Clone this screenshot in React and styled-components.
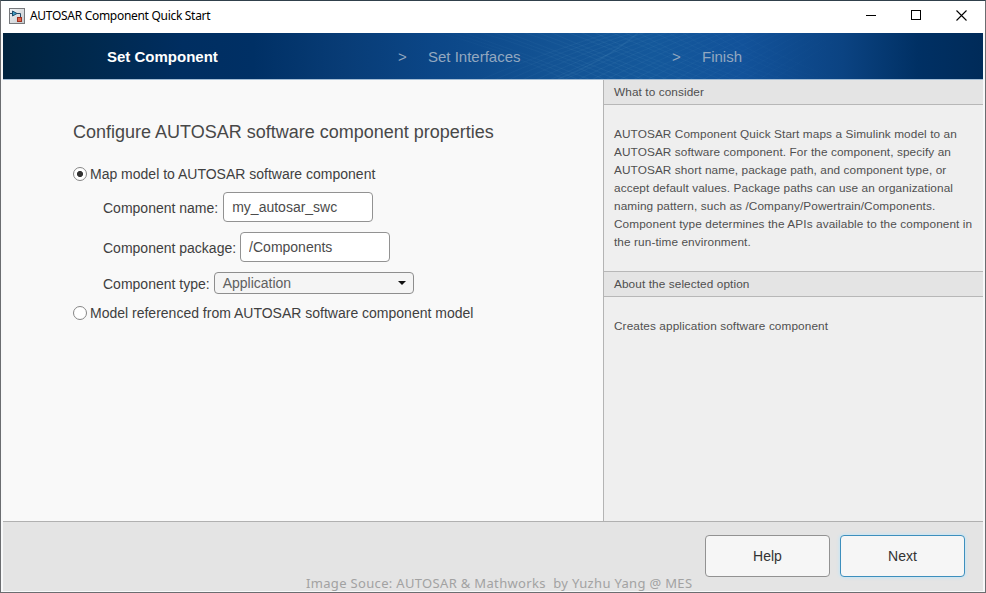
import React from "react";
import styled, { createGlobalStyle } from "styled-components";

const GlobalStyle = createGlobalStyle`
  * { box-sizing: border-box; }
  html, body { margin: 0; padding: 0; overflow: hidden; }
  body { font-family: "Liberation Sans", Arial, Helvetica, sans-serif; color: #404040; }
  input, button { font-family: inherit; margin: 0; }
`;

const Window = styled.div`
  width: 986px;
  height: 593px;
  display: flex;
  flex-direction: column;
  background: #f7f8f9;
  border: 1px solid #6b6d70;
  border-top-color: #30404b;
  padding: 0 2px 1px;
`;

const TitleBar = styled.header`
  height: 32px;
  flex: none;
  margin: 0 -2px;
  padding: 0 18px 3px 8px;
  display: flex;
  align-items: center;
  background: #fff;
`;

const Title = styled.span`
  margin-left: 5px;
  flex: 1;
  font: 12px/16px "Noto Sans", sans-serif;
  letter-spacing: -0.3px;
  color: #000;
`;

const WindowControls = styled.div`
  display: flex;
  align-items: center;
  gap: 34px;
  svg { display: block; }
`;

const Banner = styled.nav`
  position: relative;
  height: 47px;
  flex: none;
  display: flex;
  align-items: center;
  padding-top: 1px;
  border-bottom: 1px solid #a4bdd5;
  background: linear-gradient(90deg, #00233f 0, #00294e 90px, #002e61 180px, #003065 250px, #083c76 340px, #0b4687 430px, #135394 550px, #14589b 650px, #12529a 740px, #0b4382 840px, #003064 915px, #002b59 980px);
`;

const Mesh = styled.svg`
  position: absolute;
  inset: 0;
  width: 100%;
  height: 46px;
`;

const Step = styled.span`
  position: relative;
  width: ${(p) => p.$width}px;
  margin-left: ${(p) => p.$gap}px;
  font-size: 15px;
  line-height: 18px;
  white-space: nowrap;
  font-weight: ${(p) => (p.$active ? 700 : 400)};
  color: ${(p) => (p.$active ? "#fff" : "#93a8c0")};
`;

const Body = styled.div`
  flex: 1;
  min-height: 0;
  display: flex;
`;

const Main = styled.main`
  width: 600px;
  padding: 40px 0 0 70px;
  background: #f9f9f9;
`;

const Heading = styled.h1`
  margin: 0 0 22px;
  font-size: 18px;
  line-height: 24px;
  font-weight: 400;
  color: #484848;
`;

const Option = styled.label`
  display: flex;
  align-items: center;
  height: 16px;
  gap: 3px;
  font-size: 14px;
  white-space: nowrap;
`;

const Radio = styled.input`
  appearance: none;
  width: 14px;
  height: 14px;
  border: 1px solid #868686;
  border-radius: 50%;
  background: #fff;
  &:checked { background: radial-gradient(circle, #333 0 2.7px, #fff 3.4px); }
`;

const Fields = styled.div`
  padding: 10px 0 11px 30px;
`;

const Field = styled.label`
  display: flex;
  align-items: center;
  height: ${(p) => p.$height || 30}px;
  margin-bottom: ${(p) => p.$after || 0}px;
  gap: ${(p) => p.$gap || 4}px;
  font-size: 14px;
  white-space: nowrap;
`;

const FieldName = styled.span`
  padding-top: 2px;
`;

const TextInput = styled.input`
  width: 150px;
  height: 30px;
  padding: 0 8px 1px;
  border: 1px solid #929292;
  border-radius: 4px;
  background: #fff;
  font-size: 14px;
  color: #4b4b4b;
`;

const Dropdown = styled.div`
  width: 200px;
  height: 22px;
  padding: 0 7px 0 8px;
  display: flex;
  align-items: center;
  justify-content: space-between;
  border: 1px solid #8e8e8e;
  border-radius: 4px;
  background: #f5f5f5;
  color: #606060;
`;

const Sidebar = styled.aside`
  flex: 1;
  border-left: 1px solid #b4b4b4;
  background: #efefef;
  font-size: 11.8px;
  letter-spacing: 0.095px;
  color: #4f4f4f;
`;

const PanelTitle = styled.h2`
  height: ${(p) => (p.$ruled ? 26 : 25)}px;
  margin: 0;
  padding-left: 10px;
  border-top: ${(p) => (p.$ruled ? "1px solid #b7b7b7" : "0")};
  border-bottom: 1px solid #b7b7b7;
  background: #e4e4e4;
  font-size: inherit;
  line-height: 24px;
  font-weight: 400;
`;

const PanelText = styled.p`
  height: ${(p) => p.$height}px;
  margin: 0;
  padding: 20px 0 0 10px;
  line-height: 18px;
  white-space: pre;
`;

const Footer = styled.footer`
  position: relative;
  height: 70px;
  flex: none;
  display: flex;
  justify-content: flex-end;
  gap: 10px;
  padding: 13px 18px 0;
  border-top: 1px solid #b0b0b0;
  background: #e4e4e4;
`;

const ActionButton = styled.button`
  width: 125px;
  height: 42px;
  padding: 0;
  border: 1px solid ${(p) => (p.$primary ? "#3d8fbd" : "#929292")};
  border-radius: 4px;
  background: #f6f6f6;
  box-shadow: ${(p) => (p.$primary ? "0 0 3px 1px #c6e5f5" : "none")};
  font-size: 14px;
  color: #333;
`;

const Credit = styled.span`
  position: absolute;
  left: 303px;
  bottom: -1px;
  font: 13px/18px "Noto Sans", sans-serif;
  letter-spacing: 0.33px;
  color: #a2a2a2;
  white-space: pre;
`;

const AppIcon = () => (
  <svg width="16" height="16" viewBox="0 0 16 16">
    <defs>
      <linearGradient id="iconFace" x1="0" y1="0" x2="1" y2="1">
        <stop offset="0" stopColor="#f2f3f4" />
        <stop offset="1" stopColor="#c4cace" />
      </linearGradient>
    </defs>
    <rect x=".5" y=".5" width="15" height="15" fill="url(#iconFace)" stroke="#77797c" />
    <path d="M1 5.5h2M8 5.5h3.5V9" fill="none" stroke="#284b67" />
    <path d="M3.5 3v5l4.5-2.5z" fill="#3fa0c6" stroke="#1e4b69" />
    <rect x="8.5" y="9.5" width="4" height="4" fill="#e2664a" stroke="#9c3020" />
  </svg>
);

const meshLines = Array.from({ length: 22 }, (_, i) => i);

const BannerMesh = () => (
  <Mesh viewBox="0 0 980 46" preserveAspectRatio="none">
    <defs>
      <linearGradient id="meshColor" gradientUnits="userSpaceOnUse" x1="400" x2="840" y1="0" y2="0">
        <stop offset="0" stopColor="#7bb6d6" stopOpacity="0" />
        <stop offset=".45" stopColor="#7bb6d6" stopOpacity=".1" />
        <stop offset="1" stopColor="#7bb6d6" stopOpacity="0" />
      </linearGradient>
    </defs>
    <g fill="none" stroke="url(#meshColor)" strokeWidth=".8">
      {meshLines.map((i) => (
        <g key={i}>
          <path d={`M${420 + i * 15} -4Q${500 + i * 12} ${15 + (i % 3) * 3} ${570 + i * 13} 50`} />
          <path d={`M${470 + i * 14} 50Q${540 + i * 13} 19 ${620 + i * 11} -4`} />
        </g>
      ))}
      <path d="M555 46Q602 28 635 0" strokeWidth="1.5" />
    </g>
  </Mesh>
);

export default function App() {
  return (
    <>
      <GlobalStyle />
      <Window>
        <TitleBar>
          <AppIcon />
          <Title>AUTOSAR Component Quick Start</Title>
          <WindowControls>
            <svg width="11" height="11" viewBox="0 0 11 11"><path d="M0 5.5h10" stroke="#000" /></svg>
            <svg width="11" height="11" viewBox="0 0 11 11"><rect x=".5" y=".5" width="9" height="9" fill="none" stroke="#000" /></svg>
            <svg width="11" height="11" viewBox="0 0 11 11"><path d="m.5.5 10 10m0-10-10 10" stroke="#000" strokeWidth="1.1" /></svg>
          </WindowControls>
        </TitleBar>
        <Banner>
          <BannerMesh />
          <Step $active $gap={104} $width={291}>Set Component</Step>
          <Step $gap={0} $width={30}>&gt;</Step>
          <Step $gap={0} $width={244}>Set Interfaces</Step>
          <Step $gap={0} $width={30}>&gt;</Step>
          <Step $gap={0} $width={60}>Finish</Step>
        </Banner>
        <Body>
          <Main>
            <Heading>Configure AUTOSAR software component properties</Heading>
            <Option><Radio type="radio" name="mode" defaultChecked />Map model to AUTOSAR software component</Option>
            <Fields>
              <Field $after={10} $gap={5}><FieldName>Component name:</FieldName><TextInput defaultValue="my_autosar_swc" /></Field>
              <Field $after={10}><FieldName>Component package:</FieldName><TextInput defaultValue="/Components" /></Field>
              <Field $height={22}>
                <FieldName>Component type:</FieldName>
                <Dropdown>
                  Application
                  <svg width="8" height="4" viewBox="0 0 8 4"><path d="M0 0h8L4 4z" fill="#111" /></svg>
                </Dropdown>
              </Field>
            </Fields>
            <Option><Radio type="radio" name="mode" />Model referenced from AUTOSAR software component model</Option>
          </Main>
          <Sidebar>
            <PanelTitle>What to consider</PanelTitle>
            <PanelText $height={166}>{`AUTOSAR Component Quick Start maps a Simulink model to an
AUTOSAR software component. For the component, specify an
AUTOSAR short name, package path, and component type, or
accept default values. Package paths can use an organizational
naming pattern, such as /Company/Powertrain/Components.
Component type determines the APIs available to the component in
the run-time environment.`}</PanelText>
            <PanelTitle $ruled>About the selected option</PanelTitle>
            <PanelText $height={60}>Creates application software component</PanelText>
          </Sidebar>
        </Body>
        <Footer>
          <Credit>{"Image Souce: AUTOSAR & Mathworks  by Yuzhu Yang @ MES"}</Credit>
          <ActionButton>Help</ActionButton>
          <ActionButton $primary>Next</ActionButton>
        </Footer>
      </Window>
    </>
  );
}
